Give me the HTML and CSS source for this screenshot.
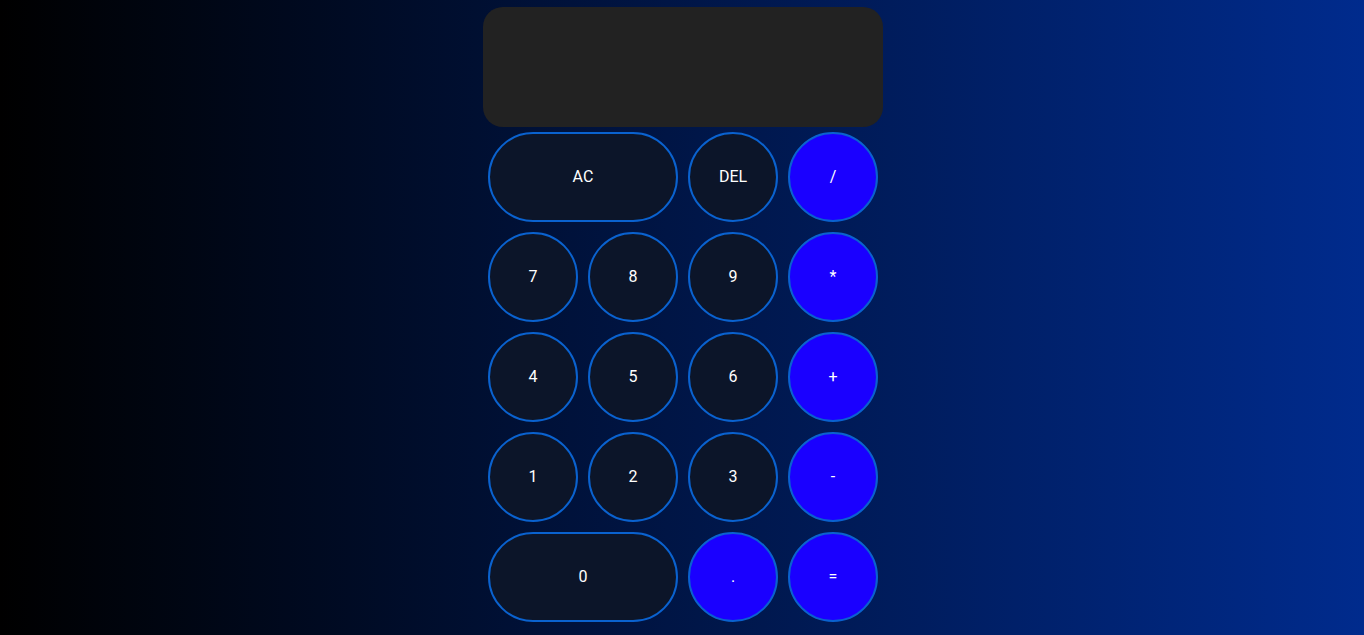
FILE: index.html
```html
<!DOCTYPE html>
<html>
<head>
<meta charset="utf-8">
<link rel="stylesheet" href="styles.css">
</head>
<body>
<div class="calc">
  <div class="display"></div>
  <div class="keys">
    <button class="key wide">AC</button>
    <button class="key">DEL</button>
    <button class="key op">/</button>
    <button class="key">7</button>
    <button class="key">8</button>
    <button class="key">9</button>
    <button class="key op">*</button>
    <button class="key">4</button>
    <button class="key">5</button>
    <button class="key">6</button>
    <button class="key op">+</button>
    <button class="key">1</button>
    <button class="key">2</button>
    <button class="key">3</button>
    <button class="key op">-</button>
    <button class="key wide">0</button>
    <button class="key op">.</button>
    <button class="key op">=</button>
  </div>
</div>
</body>
</html>
```
FILE: styles.css
```css
html, body {
  margin: 0;
  height: 100%;
}
body {
  background: linear-gradient(to right, #000000, #002b8d);
  font-family: Roboto, "Liberation Sans", sans-serif;
  overflow: hidden;
  padding-left: 2px;
  box-sizing: border-box;
}
.calc {
  width: 400px;
  margin: 7px auto 0;
}
.display {
  height: 120px;
  background: #222222;
  border-radius: 20px;
}
.keys {
  display: grid;
  grid-template-columns: repeat(4, 90px);
  grid-auto-rows: 90px;
  gap: 10px;
  padding: 5px;
}
.key {
  box-sizing: border-box;
  width: 100%;
  height: 100%;
  border: 2px solid #0a62cf;
  border-radius: 45px;
  background: #0c1529;
  color: #ffffff;
  font-family: Roboto, "Liberation Sans", sans-serif;
  font-size: 16px;
  padding: 0 0 2px;
}
.wide {
  grid-column: span 2;
}
.op {
  background: #1a00ff;
}
```
